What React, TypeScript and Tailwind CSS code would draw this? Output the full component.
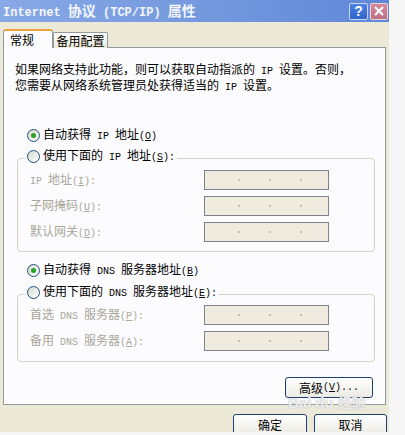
import type { ReactNode } from 'react'

const cjk = "font-['Noto_Sans_CJK_SC',sans-serif]"

// ascii runs get a narrow mono face so they take half a CJK cell, like SimSun
function Mix({ t, latin = 'text-[10px]' }: { t: string; latin?: string }) {
  const parts = t.split(/([\x00-\x7f]+)/).filter(Boolean)
  return (
    <>
      {parts.map((p, i) =>
        /^[\x00-\x7f]+$/.test(p) ? (
          <span key={i} className={`font-['Liberation_Mono',monospace] whitespace-pre ${latin}`}>
            {mnemonic(p)}
          </span>
        ) : (
          <span key={i}>{p}</span>
        ),
      )}
    </>
  )
}

function mnemonic(s: string): ReactNode[] {
  const out: ReactNode[] = []
  const bits = s.split(/&(.)/)
  bits.forEach((b, i) => {
    if (!b) return
    out.push(i % 2 ? <span key={i} className="underline underline-offset-1">{b}</span> : b)
  })
  return out
}

function Radio({ checked = false }: { checked?: boolean }) {
  return (
    <span className="flex h-[13px] w-[13px] shrink-0 items-center justify-center rounded-full border border-[#1c5180] bg-linear-to-br from-[#d8d8d0] to-white">
      {checked && <span className="h-[5px] w-[5px] rounded-full bg-[#2aa12a]" />}
    </span>
  )
}

function RadioRow({ label, checked }: { label: string; checked?: boolean }) {
  return (
    <div className="flex h-[16px] items-center gap-[3px] leading-[16px] text-black">
      <Radio checked={checked} />
      <span className="whitespace-nowrap">
        <Mix t={label} />
      </span>
    </div>
  )
}

function IpBox() {
  return (
    <div className="flex h-[20px] w-[125px] items-center gap-[29px] border border-[#7f8090] bg-[#efebdf] pl-[33px]">
      <span className="h-[2px] w-[2px] bg-[#c4c0b2]" />
      <span className="h-[2px] w-[2px] bg-[#c4c0b2]" />
      <span className="h-[2px] w-[2px] bg-[#c4c0b2]" />
    </div>
  )
}

function FieldRow({ label }: { label: string }) {
  return (
    <div className="flex items-center">
      <span className="w-[174px] whitespace-nowrap leading-[16px] text-[#aaa698]">
        <Mix t={label} />
      </span>
      <IpBox />
    </div>
  )
}

function Group({ legend, children, className }: { legend: string; children: ReactNode; className: string }) {
  return (
    <div className={`relative ml-[13px] w-[358px] rounded-[4px] border border-[#d3d2c4] pl-[12px] ${className}`}>
      <div className="absolute -top-[11px] left-[7px] bg-[#fcfcfe] px-[2px]">
        <RadioRow label={legend} />
      </div>
      {children}
    </div>
  )
}

function XpButton({ children, className }: { children: ReactNode; className: string }) {
  return (
    <button className={`flex items-center justify-center rounded-[3px] border border-[#1d3f6e] bg-linear-to-b from-white to-[#ecebe4] text-[12px] leading-none text-black ${className}`}>
      {children}
    </button>
  )
}

export default function App() {
  return (
    <div className={`h-[435px] w-[405px] bg-[#f6f6f6] text-[12px] ${cjk}`}>
      <div className="relative flex h-[432px] w-[389px] flex-col overflow-hidden bg-[#ece9d8]">
        <div className="flex h-[22px] shrink-0 items-center bg-linear-to-r from-[#88a8e6] via-[#7599de] to-[#5f88d8] pl-[3px] pr-[1px]">
          <span className="flex-1 whitespace-nowrap text-[14px] font-bold leading-none text-white/90">
            <Mix t="Internet 协议 (TCP/IP) 属性" latin="text-[12px]" />
          </span>
          <span className="flex h-[17px] w-[19px] items-center justify-center rounded-[2px] border border-[#c8d6f4] bg-linear-to-b from-[#4f83e6] to-[#2f62cc] font-['Liberation_Sans',sans-serif] text-[14px] font-bold text-white">
            ?
          </span>
          <span className="ml-[2px] flex h-[17px] w-[18px] items-center justify-center rounded-[2px] border border-[#ead4dc] bg-linear-to-b from-[#d38a9c] to-[#bf6f84]">
            <svg width="12" height="12" viewBox="0 0 12 12" aria-hidden>
              <path d="M2 2 L10 10 M10 2 L2 10" stroke="#fff" strokeWidth="2" />
            </svg>
          </span>
        </div>

        <div className="flex flex-col px-[3px] pt-[7px]">
          <div className="relative z-10 -mb-[1px] flex h-[19px] items-end">
            <div className="flex h-[19px] w-[50px] items-center rounded-t-[3px] border border-b-0 border-t-2 border-[#919b9c] border-t-[#e8a23a] bg-[#fcfcfe] pl-[6px] text-black">
              常规
            </div>
            <div className="flex h-[16px] w-[55px] items-center justify-center rounded-t-[2px] border border-b-0 border-[#919b9c] bg-linear-to-b from-white to-[#ece9d8] text-black">
              备用配置
            </div>
          </div>

          <div className="flex h-[358px] flex-col border border-[#919b9c] bg-[#fcfcfe]">
            <p className="pl-[11px] pt-[14px] leading-[13px] text-black">
              <Mix t="如果网络支持此功能，则可以获取自动指派的 IP 设置。否则，" />
              <br />
              <Mix t="您需要从网络系统管理员处获得适当的 IP 设置。" />
            </p>

            <div className="mt-[33px] pl-[23px]">
              <RadioRow label="自动获得 IP 地址(&O)" checked />
            </div>

            <Group legend="使用下面的 IP 地址(&S):" className="mt-[15px] h-[94px] pt-[11px]">
              <div className="flex flex-col gap-[6px]">
                <FieldRow label="IP 地址(&I):" />
                <FieldRow label="子网掩码(&U):" />
                <FieldRow label="默认网关(&D):" />
              </div>
            </Group>

            <div className="mt-[10px] pl-[23px]">
              <RadioRow label="自动获得 DNS 服务器地址(&B)" checked />
            </div>

            <Group legend="使用下面的 DNS 服务器地址(&E):" className="mt-[16px] h-[68px] pt-[10px]">
              <div className="flex flex-col gap-[6px]">
                <FieldRow label="首选 DNS 服务器(&P):" />
                <FieldRow label="备用 DNS 服务器(&A):" />
              </div>
            </Group>

            <div className="mt-[15px] flex justify-end pr-[12px]">
              <XpButton className="h-[21px] w-[88px]">
                <Mix t="高级(&V)..." />
              </XpButton>
            </div>
          </div>
        </div>

        <div className="mt-[9px] flex justify-end gap-[7px] pr-[2px]">
          <XpButton className="h-[21px] w-[74px]">确定</XpButton>
          <XpButton className="h-[21px] w-[73px]">取消</XpButton>
        </div>

        {/* faint watermark over the bottom edge */}
        <div className="pointer-events-none absolute left-[288px] top-[396px] flex h-[13px] items-center gap-[4px] font-['Liberation_Sans',sans-serif] text-[15px] font-bold leading-[13px] text-white/80 [text-shadow:0_0_1px_#9a9a9a]">
          <span>Bai</span>
          <span>du</span>
          <span className={`${cjk} text-[14px] leading-[13px]`}>经验</span>
        </div>
      </div>
    </div>
  )
}
